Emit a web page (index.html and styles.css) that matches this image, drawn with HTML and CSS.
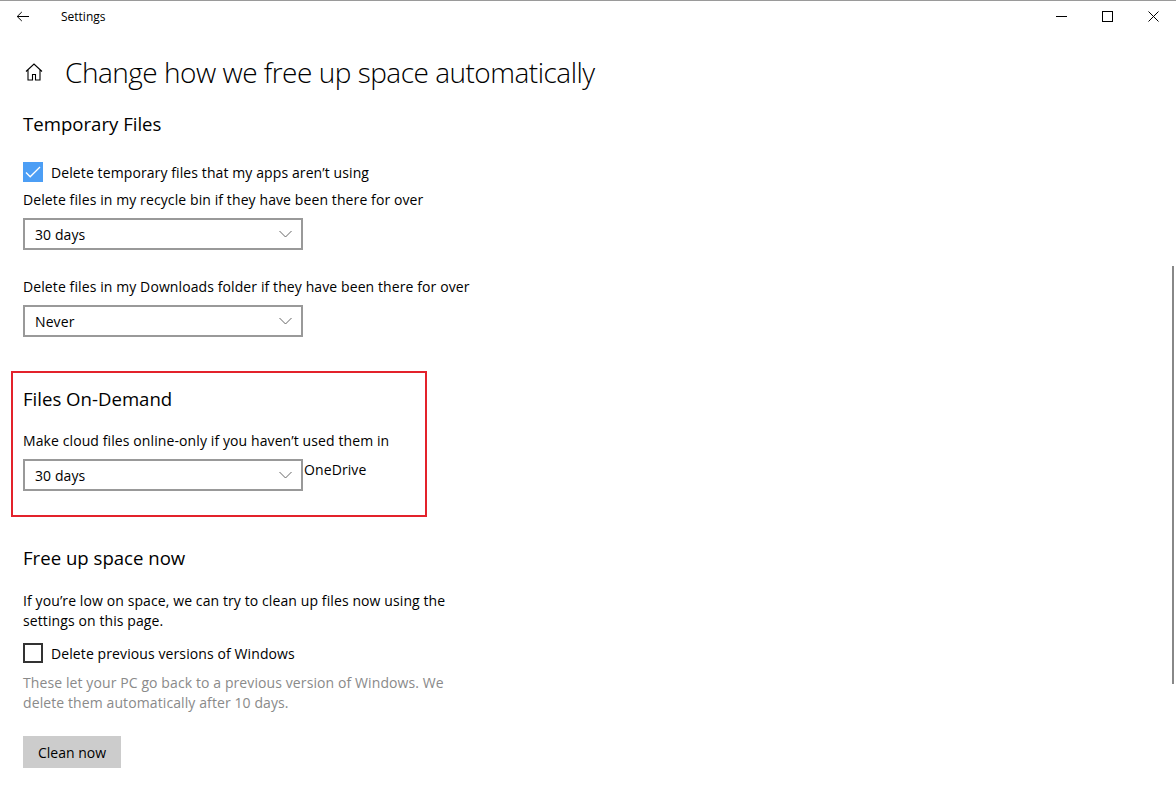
FILE: index.html
```html
<!DOCTYPE html>
<html lang="en">
<head>
    <meta charset="UTF-8">
    <title>Settings</title>
    <link rel="stylesheet" href="styles.css">
</head>
<body>
    <div class="titlebar">
        <div class="back">
            <svg width="14" height="11" viewBox="0 0 14 11"><path d="M13 5.5H1.2M5.8 1L1.2 5.5 5.8 10" fill="none" stroke="#000" stroke-width="1"/></svg>
        </div>
        <span class="app-title">Settings</span>
        <div class="controls">
            <div class="ctl"><svg width="11" height="11" viewBox="0 0 11 11"><path d="M0 5.5h11" stroke="#000" stroke-width="1"/></svg></div>
            <div class="ctl"><svg width="11" height="11" viewBox="0 0 11 11"><rect x="0.5" y="0.5" width="10" height="10" fill="none" stroke="#000" stroke-width="1"/></svg></div>
            <div class="ctl"><svg width="11" height="11" viewBox="0 0 11 11"><path d="M0.5 0.5l10 10M10.5 0.5l-10 10" stroke="#000" stroke-width="1"/></svg></div>
        </div>
    </div>

    <main class="page">
        <header class="page-header">
            <svg class="home" width="18" height="18" viewBox="0 0 18 18"><path d="M1 8.5L9 1l8 7.5M3 6.8V17h4.5v-5.5h3V17H15V6.8" fill="none" stroke="#000" stroke-width="1.1"/></svg>
            <h1>Change how we free up space automatically</h1>
        </header>

        <section class="group">
            <h2>Temporary Files</h2>
            <label class="check">
                <span class="box checked"><svg width="16" height="12" viewBox="0 0 16 12"><path d="M1 6.5l4.2 4.3L15 1" fill="none" stroke="#fff" stroke-width="1.3"/></svg></span>
                Delete temporary files that my apps aren’t using
            </label>
            <p class="label first">Delete files in my recycle bin if they have been there for over</p>
            <div class="select">30 days<svg class="chev" width="13" height="8" viewBox="0 0 13 8"><path d="M0.5 1l6 6 6-6" fill="none" stroke="#666" stroke-width="1"/></svg></div>
            <p class="label second">Delete files in my Downloads folder if they have been there for over</p>
            <div class="select">Never<svg class="chev" width="13" height="8" viewBox="0 0 13 8"><path d="M0.5 1l6 6 6-6" fill="none" stroke="#666" stroke-width="1"/></svg></div>
        </section>

        <section class="group highlight">
            <h2>Files On-Demand</h2>
            <p class="label cloud">Make cloud files online-only if you haven’t used them in</p>
            <div class="select-row">
                <div class="select">30 days<svg class="chev" width="13" height="8" viewBox="0 0 13 8"><path d="M0.5 1l6 6 6-6" fill="none" stroke="#666" stroke-width="1"/></svg></div>
                <span class="suffix">OneDrive</span>
            </div>
        </section>

        <section class="group now">
            <h2>Free up space now</h2>
            <p class="label intro">If you’re low on space, we can try to clean up files now using the settings on this page.</p>
            <label class="check windows">
                <span class="box"></span>
                Delete previous versions of Windows
            </label>
            <p class="note">These let your PC go back to a previous version of Windows. We delete them automatically after 10 days.</p>
            <button class="clean">Clean now</button>
        </section>
    </main>

    <div class="scrollbar"></div>
</body>
</html>
```

FILE: styles.css
```css
/* Finestra impostazioni */
html, body {
    margin: 0;
    padding: 0;
    height: 100%;
    overflow: hidden;
    background: #fff;
    color: #000;
    font-family: "Open Sans", "Noto Sans", Arial, sans-serif;
    font-size: 14px;
    letter-spacing: 0.1px;
}

.titlebar {
    display: flex;
    align-items: center;
    height: 31px;
    border-top: 1px solid #9a9a9a;
    letter-spacing: 0;
}

.back {
    width: 46px;
    display: flex;
    justify-content: center;
}

.app-title {
    margin-left: 15px;
    font-size: 12px;
}

.controls {
    margin-left: auto;
    display: flex;
}

.ctl {
    width: 46px;
    display: flex;
    justify-content: center;
}

.page {
    padding-left: 23px;
}

.page-header {
    display: flex;
    align-items: center;
    height: 40px;
    margin-top: 20px;
}

.home {
    margin-left: 2px;
    margin-right: 22px;
}

h1 {
    margin: 0;
    font-size: 28px;
    font-weight: 300;
    line-height: 40px;
    letter-spacing: -0.5px;
}

h2 {
    margin: 0;
    font-size: 18.6px;
    font-weight: 400;
    line-height: 28px;
    letter-spacing: 0;
}

.group > h2 {
    margin-top: 18px;
}

p {
    margin: 0;
    line-height: 20px;
}

.check {
    display: flex;
    align-items: center;
    height: 20px;
    margin-top: 24px;
}

.box {
    width: 16px;
    height: 16px;
    border: 2px solid #333;
    margin-right: 8px;
    display: flex;
    align-items: center;
    justify-content: center;
}

.box.checked {
    background: #4c9ef5;
    border-color: #4c9ef5;
}

.label.first {
    margin-top: 8px;
}

.label.second {
    margin-top: 27px;
}

.select {
    box-sizing: border-box;
    width: 280px;
    height: 32px;
    margin-top: 8px;
    border: 2px solid #999;
    padding: 0 10px;
    display: flex;
    align-items: center;
    justify-content: space-between;
}

.chev {
    margin-right: -1px;
}

/* riquadro rosso */
.highlight {
    margin-top: 34px;
    margin-left: -12px;
    width: 402px;
    border: 2px solid #e3222b;
    padding: 12px 0 24px 10px;
}

.highlight > h2 {
    margin-top: 0;
}

.label.cloud {
    margin-top: 18px;
}

.select-row {
    display: flex;
    align-items: flex-start;
}

.suffix {
    margin-top: 9px;
    margin-left: 1px;
}

.now > h2 {
    margin-top: 27px;
}

.label.intro {
    margin-top: 19px;
    width: 440px;
}

.check.windows {
    margin-top: 12px;
}

.note {
    margin-top: 10px;
    width: 440px;
    color: #8a8a8a;
}

.clean {
    margin-top: 23px;
    height: 32px;
    width: 98px;
    border: none;
    background: #ccc;
    font-family: inherit;
    font-size: 14px;
    color: #000;
}

.scrollbar {
    position: absolute;
    right: 2px;
    top: 266px;
    width: 2px;
    height: 418px;
    background: #888;
}
```
